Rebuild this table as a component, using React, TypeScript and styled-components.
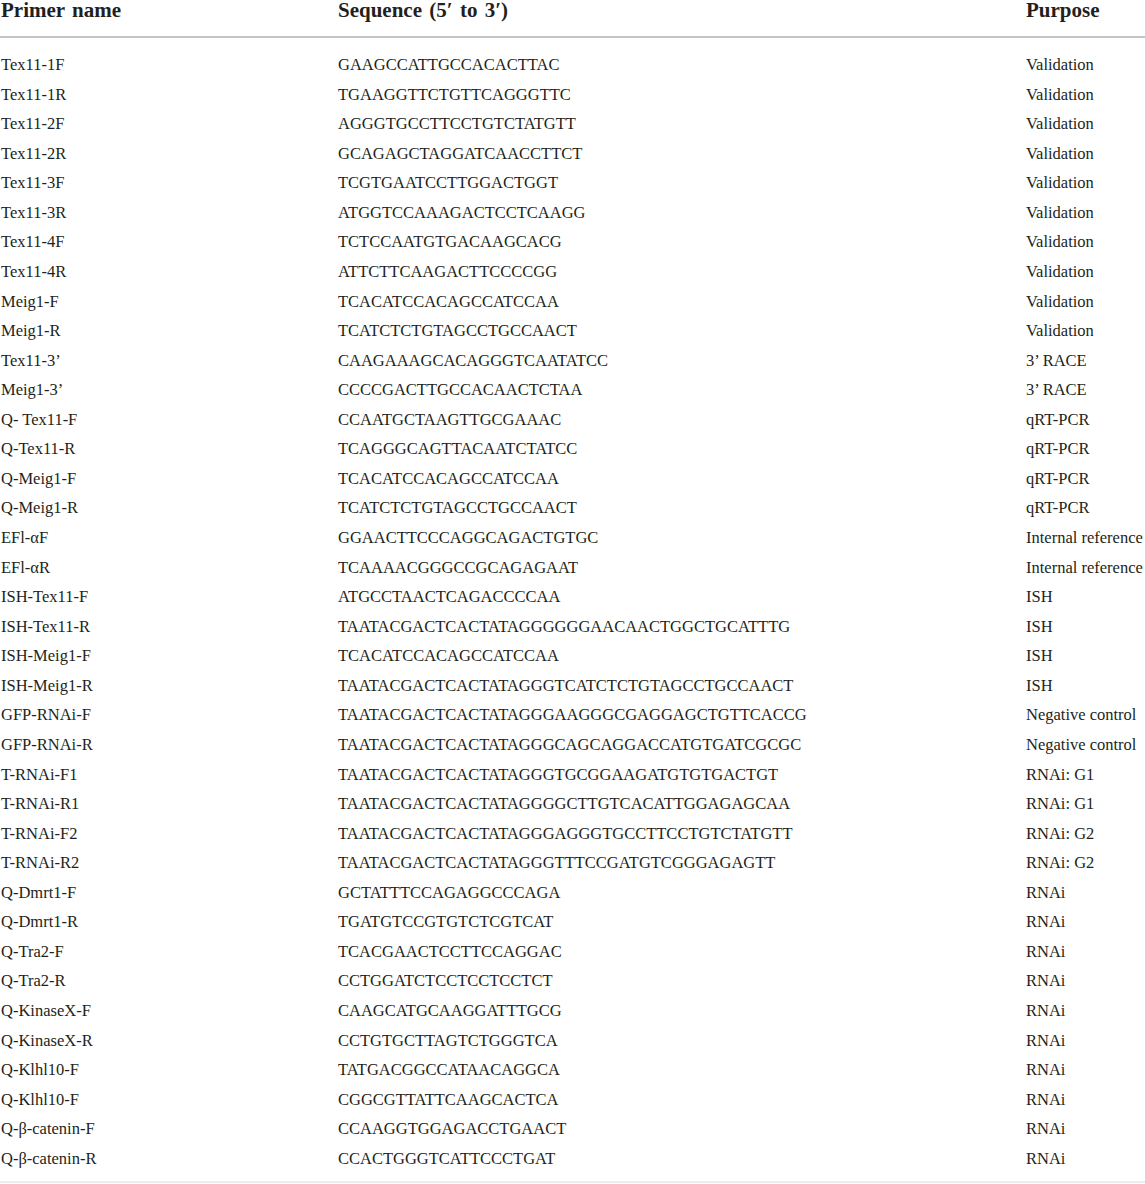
import React from "react";
import styled, { createGlobalStyle } from "styled-components";

const Global = createGlobalStyle`
  html, body { margin: 0; padding: 0; background: #ffffff; }
  body { overflow: hidden; }
`;

const Page = styled.main`
  width: 1145px;
  font-family: "Liberation Serif", "Times New Roman", serif;
  color: #231f20;
`;

const Columns = `
  display: grid;
  grid-template-columns: 338px 688px 1fr;
`;

const HeadRow = styled.div`
  ${Columns}
  height: 36px;
  border-bottom: 2px solid #c4c4c4;
  font-size: 21px;
  font-weight: 700;
  line-height: 21px;
  word-spacing: 2px;
`;

const Body = styled.div`
  padding: 12px 0 8px;
  border-bottom: 2px solid #ececec;
`;

const Row = styled.div`
  ${Columns}
  height: 29.57px;
  font-size: 16.5px;
  line-height: 29.57px;
`;

const Cell = styled.div<{ $first?: boolean }>`
  white-space: nowrap;
  padding-left: ${(p) => (p.$first ? "1px" : "0")};
`;

const rows: [string, string, string][] = [
  ["Tex11-1F", "GAAGCCATTGCCACACTTAC", "Validation"],
  ["Tex11-1R", "TGAAGGTTCTGTTCAGGGTTC", "Validation"],
  ["Tex11-2F", "AGGGTGCCTTCCTGTCTATGTT", "Validation"],
  ["Tex11-2R", "GCAGAGCTAGGATCAACCTTCT", "Validation"],
  ["Tex11-3F", "TCGTGAATCCTTGGACTGGT", "Validation"],
  ["Tex11-3R", "ATGGTCCAAAGACTCCTCAAGG", "Validation"],
  ["Tex11-4F", "TCTCCAATGTGACAAGCACG", "Validation"],
  ["Tex11-4R", "ATTCTTCAAGACTTCCCCGG", "Validation"],
  ["Meig1-F", "TCACATCCACAGCCATCCAA", "Validation"],
  ["Meig1-R", "TCATCTCTGTAGCCTGCCAACT", "Validation"],
  ["Tex11-3\u2019", "CAAGAAAGCACAGGGTCAATATCC", "3\u2019 RACE"],
  ["Meig1-3\u2019", "CCCCGACTTGCCACAACTCTAA", "3\u2019 RACE"],
  ["Q- Tex11-F", "CCAATGCTAAGTTGCGAAAC", "qRT-PCR"],
  ["Q-Tex11-R", "TCAGGGCAGTTACAATCTATCC", "qRT-PCR"],
  ["Q-Meig1-F", "TCACATCCACAGCCATCCAA", "qRT-PCR"],
  ["Q-Meig1-R", "TCATCTCTGTAGCCTGCCAACT", "qRT-PCR"],
  ["EFl-\u03b1F", "GGAACTTCCCAGGCAGACTGTGC", "Internal reference"],
  ["EFl-\u03b1R", "TCAAAACGGGCCGCAGAGAAT", "Internal reference"],
  ["ISH-Tex11-F", "ATGCCTAACTCAGACCCCAA", "ISH"],
  ["ISH-Tex11-R", "TAATACGACTCACTATAGGGGGGAACAACTGGCTGCATTTG", "ISH"],
  ["ISH-Meig1-F", "TCACATCCACAGCCATCCAA", "ISH"],
  ["ISH-Meig1-R", "TAATACGACTCACTATAGGGTCATCTCTGTAGCCTGCCAACT", "ISH"],
  ["GFP-RNAi-F", "TAATACGACTCACTATAGGGAAGGGCGAGGAGCTGTTCACCG", "Negative control"],
  ["GFP-RNAi-R", "TAATACGACTCACTATAGGGCAGCAGGACCATGTGATCGCGC", "Negative control"],
  ["T-RNAi-F1", "TAATACGACTCACTATAGGGTGCGGAAGATGTGTGACTGT", "RNAi: G1"],
  ["T-RNAi-R1", "TAATACGACTCACTATAGGGGCTTGTCACATTGGAGAGCAA", "RNAi: G1"],
  ["T-RNAi-F2", "TAATACGACTCACTATAGGGAGGGTGCCTTCCTGTCTATGTT", "RNAi: G2"],
  ["T-RNAi-R2", "TAATACGACTCACTATAGGGTTTCCGATGTCGGGAGAGTT", "RNAi: G2"],
  ["Q-Dmrt1-F", "GCTATTTCCAGAGGCCCAGA", "RNAi"],
  ["Q-Dmrt1-R", "TGATGTCCGTGTCTCGTCAT", "RNAi"],
  ["Q-Tra2-F", "TCACGAACTCCTTCCAGGAC", "RNAi"],
  ["Q-Tra2-R", "CCTGGATCTCCTCCTCCTCT", "RNAi"],
  ["Q-KinaseX-F", "CAAGCATGCAAGGATTTGCG", "RNAi"],
  ["Q-KinaseX-R", "CCTGTGCTTAGTCTGGGTCA", "RNAi"],
  ["Q-Klhl10-F", "TATGACGGCCATAACAGGCA", "RNAi"],
  ["Q-Klhl10-F", "CGGCGTTATTCAAGCACTCA", "RNAi"],
  ["Q-\u03b2-catenin-F", "CCAAGGTGGAGACCTGAACT", "RNAi"],
  ["Q-\u03b2-catenin-R", "CCACTGGGTCATTCCCTGAT", "RNAi"],
];

export default function App() {
  return (
    <Page>
      <Global />
      <HeadRow>
        <Cell $first>Primer name</Cell>
        <Cell>Sequence (5{"\u2032"} to 3{"\u2032"})</Cell>
        <Cell>Purpose</Cell>
      </HeadRow>
      <Body>
        {rows.map(([name, seq, purpose], i) => (
          <Row key={i}>
            <Cell $first>{name}</Cell>
            <Cell>{seq}</Cell>
            <Cell>{purpose}</Cell>
          </Row>
        ))}
      </Body>
    </Page>
  );
}
